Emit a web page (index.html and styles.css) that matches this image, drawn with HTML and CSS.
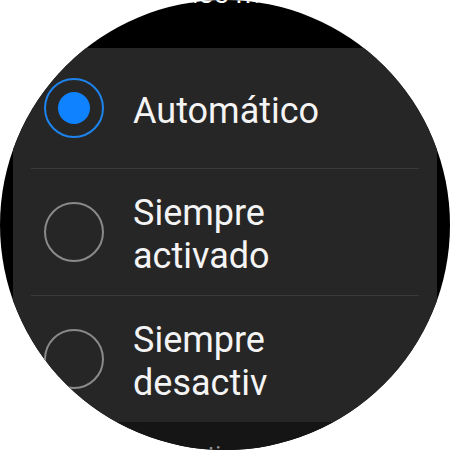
FILE: index.html
```html
<html>
    <head>
        <link rel="stylesheet" href="styles.css">
    </head>
    <body>
        <div class="watch">
            <div class="header">
                <div class="title">Modos modo</div>
            </div>
            <div class="card">
                <div class="option">
                    <span class="radio checked"></span>
                    <span class="label">Automático</span>
                </div>
                <div class="option">
                    <span class="radio"></span>
                    <span class="label">Siempre activado</span>
                </div>
                <div class="option last">
                    <span class="radio"></span>
                    <span class="label">Siempre desactiv</span>
                </div>
            </div>
            <div class="footer">Inactivo</div>
        </div>
    </body>
</html>
```

FILE: styles.css
```css
body {
    margin: 0;
    background: #ffffff;
    font-family: Roboto, "Noto Sans", sans-serif;
}

.watch {
    width: 450px;
    height: 450px;
    border-radius: 50%;
    overflow: hidden;
    background: #000000;
    display: flex;
    flex-direction: column;
}

.header {
    height: 48px;
    display: flex;
    flex-direction: column;
    align-items: center;
    flex-shrink: 0;
}

.title {
    margin-top: -22px;
    font-size: 28px;
    line-height: 32px;
    color: #ffffff;
}

.card {
    margin: 0 13px;
    background: #262626;
    flex-shrink: 0;
}

.option {
    display: flex;
    align-items: center;
    gap: 29px;
    min-height: 80px;
    margin: 0 18px;
    padding: 20px 0 20px 13px;
    border-bottom: 1px solid #3a3a3a;
}

.option.last {
    border-bottom: none;
}

.radio {
    width: 56px;
    height: 56px;
    border: 2px solid #8a8a8a;
    border-radius: 50%;
    flex-shrink: 0;
    display: flex;
    align-items: center;
    justify-content: center;
}

.radio.checked {
    border-color: #1d84ee;
}

.radio.checked::after {
    content: "";
    width: 32px;
    height: 32px;
    border-radius: 50%;
    background: #0f82ff;
}

.label {
    width: 200px;
    padding-top: 3px;
    margin-bottom: -3px;
    font-size: 36px;
    line-height: 43px;
    color: #f4f4f4;
}

.footer {
    flex: 1;
    background: #151515;
    padding: 19px 0 0 162px;
    font-size: 24px;
    line-height: 28px;
    color: #9a9a9a;
}
```
